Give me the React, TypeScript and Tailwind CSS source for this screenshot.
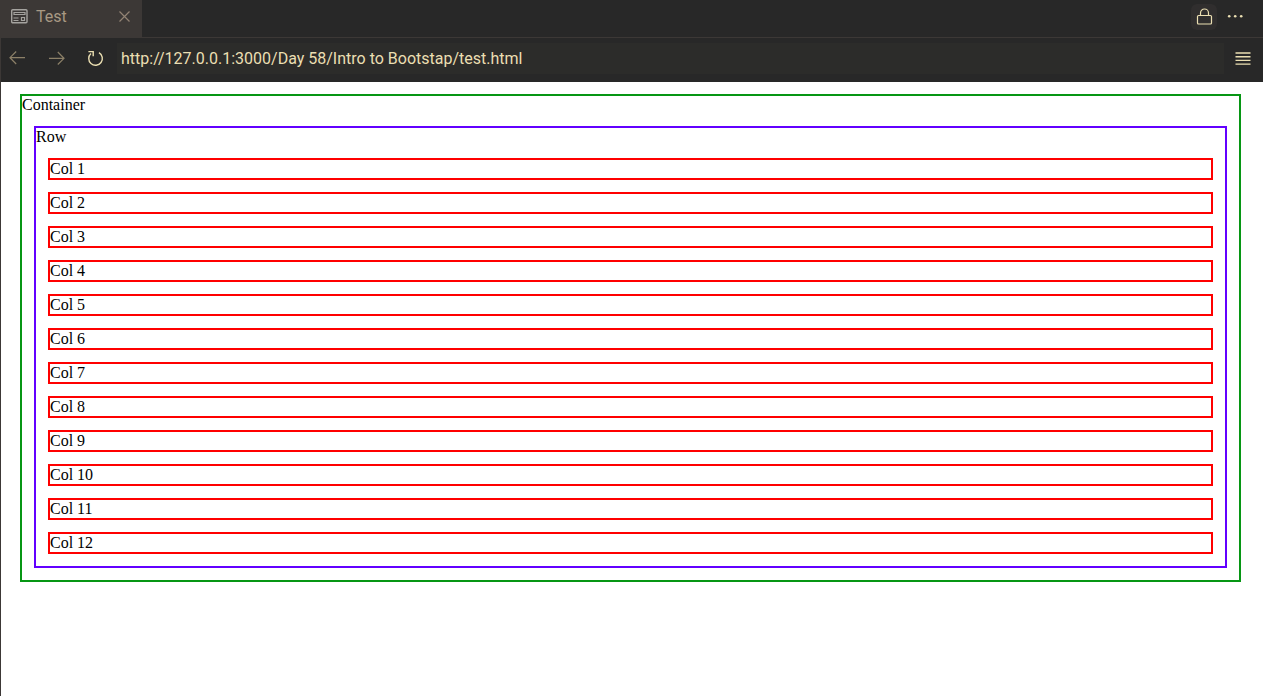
import React from 'react';

const columns = Array.from({ length: 12 }, (_, i) => `Col ${i + 1}`);

type IconProps = { children: React.ReactNode; className?: string };

function Icon({ children, className = '' }: IconProps) {
  return (
    <svg
      aria-hidden="true"
      width="18"
      height="18"
      viewBox="0 0 18 18"
      fill="none"
      stroke="currentColor"
      strokeWidth="1.2"
      className={className}
    >
      {children}
    </svg>
  );
}

function TabBar() {
  return (
    <header className="flex h-[38px] items-start justify-between border-b border-[#3c3836]">
      <div className="flex h-[37px] w-[142px] items-center bg-[#3c3836] pr-2 pb-1 pl-[10px] text-[#a89984]">
        <Icon className="text-[#a5a39f]">
          <rect x="1.7" y="1.7" width="15.3" height="13" rx="1" strokeWidth="1.4" />
          <path d="M4 4.5h11v2H4zM3.5 10h5M3.5 12.5h5M11.5 9.5h3v3h-3z" />
        </Icon>
        <span className="ml-2 grow text-base leading-5">Test</span>
        <button type="button" aria-label="Close tab" className="flex text-[#928374]">
          <Icon>
            <path d="M3.5 3.5l10 10M13.5 3.5l-10 10" />
          </Icon>
        </button>
      </div>
      <div className="flex items-center gap-[10px] pt-1 pr-[18px] text-[#ebdfb2]">
        <button
          type="button"
          aria-label="Lock group"
          className="flex size-[26px] items-center justify-center rounded-md bg-[#302e2e]"
        >
          <Icon>
            <rect x="2.5" y="7.5" width="14" height="8.5" rx="1" />
            <path d="M5.5 7.5V5a4 4 0 0 1 8 0v2.5" />
          </Icon>
        </button>
        <button type="button" aria-label="More actions" className="flex">
          <Icon>
            <g fill="currentColor" stroke="none">
              <circle cx="2.2" cy="8.3" r="1.3" />
              <circle cx="8.2" cy="8.3" r="1.3" />
              <circle cx="14.2" cy="8.3" r="1.3" />
            </g>
          </Icon>
        </button>
      </div>
    </header>
  );
}

function AddressBar() {
  return (
    <nav className="flex h-11 items-center pr-[11px] pb-1 pl-[7px] text-[#ebdfb2]">
      <button type="button" aria-label="Back" className="flex text-[#8c8068]">
        <Icon>
          <path d="M17 8.7H2M8.2 2.5L2 8.7L8.2 15" />
        </Icon>
      </button>
      <button type="button" aria-label="Forward" className="ml-[21px] flex text-[#8c8068]">
        <Icon>
          <path d="M2 9.3h15M10.8 3L17 9.3L10.8 15.5" />
        </Icon>
      </button>
      <button type="button" aria-label="Reload" className="ml-[21px] flex">
        <Icon>
          <path d="M5 4.4A6.8 6.8 0 1 0 13 3.6M2.4 2.6h4.8v4.6" strokeWidth="1.4" />
        </Icon>
      </button>
      <input
        type="text"
        aria-label="Address"
        defaultValue="http://127.0.0.1:3000/Day 58/Intro to Bootstap/test.html"
        className="ml-[13px] h-[31px] min-w-0 grow bg-[#2c2c2a] px-1 text-base leading-5 outline-none"
      />
      <button type="button" aria-label="Menu" className="ml-[10px] flex">
        <Icon>
          <path d="M1.5 4h15M1.5 7.7h15M1.5 11.4h15M1.5 15.1h15" strokeWidth="1.4" />
        </Icon>
      </button>
    </nav>
  );
}

export default function App() {
  return (
    <div className="flex min-h-screen flex-col bg-white">
      <div className="bg-[#282828] font-[Roboto,sans-serif]">
        <TabBar />
        <div className="border-l border-[#3c3836]">
          <AddressBar />
        </div>
      </div>
      <main className="grow border-l border-[#3c3836] pt-3 pr-[22px] pb-3 pl-[19px] font-['Liberation_Serif',serif] text-base leading-[18px] text-black">
        <div className="border-2 border-[#079614]">
          Container
          <div className="m-3 border-2 border-[#6200ff]">
            Row
            {columns.map((label) => (
              <div key={label} className="m-3 border-2 border-[#ff0000]">
                {label}
              </div>
            ))}
          </div>
        </div>
      </main>
    </div>
  );
}
